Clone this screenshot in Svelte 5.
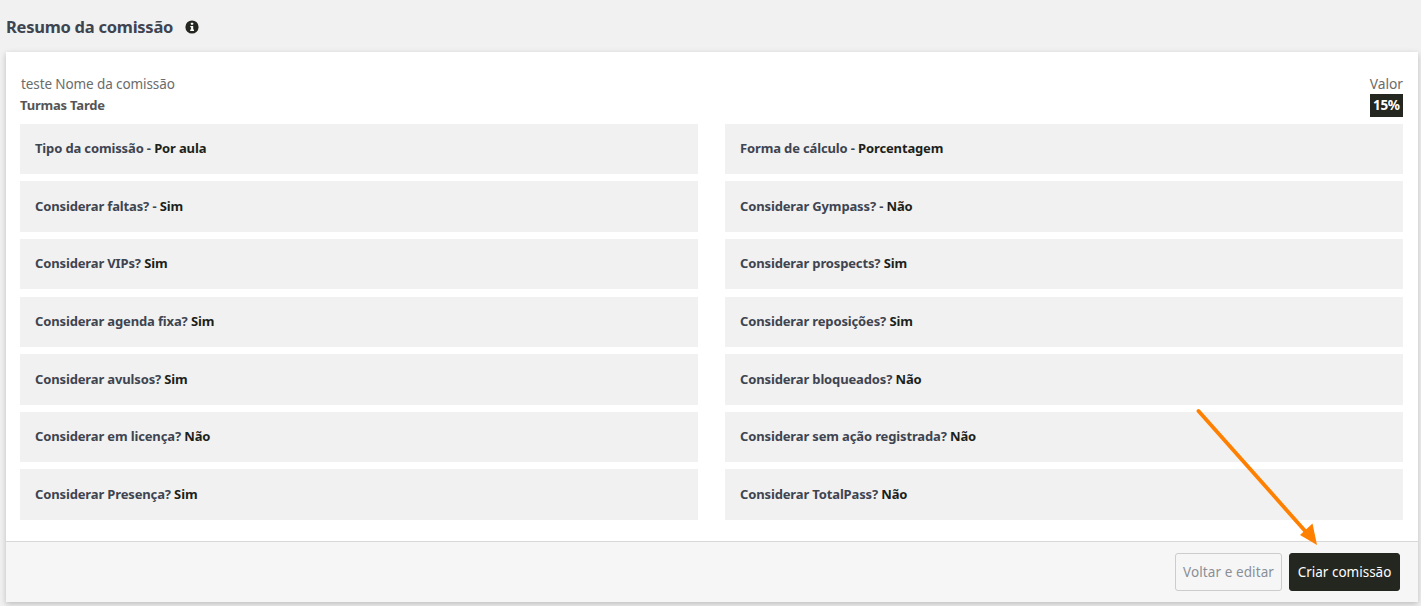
<script>
  const rows = [
    ['Tipo da comissão - ', 'Por aula', 'Forma de cálculo - ', 'Porcentagem'],
    ['Considerar faltas? - ', 'Sim', 'Considerar Gympass? - ', 'Não'],
    ['Considerar VIPs? ', 'Sim', 'Considerar prospects? ', 'Sim'],
    ['Considerar agenda fixa? ', 'Sim', 'Considerar reposições? ', 'Sim'],
    ['Considerar avulsos? ', 'Sim', 'Considerar bloqueados? ', 'Não'],
    ['Considerar em licença? ', 'Não', 'Considerar sem ação registrada? ', 'Não'],
    ['Considerar Presença? ', 'Sim', 'Considerar TotalPass? ', 'Não']
  ];
</script>

<div class="page">
  <h2 class="title">
    Resumo da comissão
    <svg class="info" viewBox="0 0 14 14" width="14" height="14">
      <circle cx="7" cy="7" r="6.6" fill="#23271f" />
      <rect x="5.9" y="2.7" width="2.3" height="2.1" rx="0.5" fill="#fff" />
      <path d="M5.3 6h2.9v3.6h.8v1.3H5.2V9.6h.9V7.3h-.8z" fill="#fff" />
    </svg>
  </h2>

  <div class="card">
    <div class="body">
      <div class="head">
        <div>
          <div class="name">teste Nome da comissão</div>
          <div class="turma">Turmas Tarde</div>
        </div>
        <div class="value">
          <div class="name">Valor</div>
          <span class="badge">15%</span>
        </div>
      </div>

      <div class="grid">
        {#each rows as r}
          <div class="cell">{r[0]}<b>{r[1]}</b></div>
          <div class="cell">{r[2]}<b>{r[3]}</b></div>
        {/each}
      </div>
    </div>

    <div class="footer">
      <button class="btn ghost">Voltar e editar</button>
      <button class="btn dark">Criar comissão</button>
    </div>
  </div>

  <svg class="arrow" width="1421" height="606" viewBox="0 0 1421 606">
    <line x1="1198.5" y1="411" x2="1306" y2="532" stroke="#ff8000" stroke-width="3.8" stroke-linecap="round" />
    <polygon points="1317,545 1300,535 1312.5,523.5" fill="#ff8000" />
  </svg>
</div>

<style>
  :global(body) {
    margin: 0;
    background: #f1f1f1;
  }

  .page {
    position: relative;
    height: 606px;
    overflow: hidden;
    box-sizing: border-box;
    padding: 0 3px 0 6px;
    font-family: "Noto Sans", "Open Sans", sans-serif;
    font-size: 13px;
    color: #3e4450;
  }

  .title {
    display: flex;
    align-items: center;
    gap: 12px;
    height: 52px;
    margin: 0;
    padding-top: 1px;
    box-sizing: border-box;
    font-size: 16.5px;
    font-weight: 700;
    letter-spacing: -0.25px;
    color: #3e4450;
  }

  .card {
    background: #fff;
    height: 550px;
    display: flex;
    flex-direction: column;
    box-shadow: 0 2px 6px rgba(0, 0, 0, 0.22);
  }

  .body {
    flex: 1;
    padding: 23px 15px 0 14px;
  }

  .head {
    display: flex;
    justify-content: space-between;
    height: 48.8px;
  }

  .name {
    font-size: 13.5px;
    line-height: 19px;
    padding-left: 1px;
    color: #6b6b6b;
    letter-spacing: -0.1px;
  }

  .turma {
    font-size: 13px;
    line-height: 22px;
    font-weight: 700;
    color: #555;
    letter-spacing: -0.2px;
  }

  .value {
    text-align: right;
  }

  .value .name {
    font-size: 13.8px;
    line-height: 18px;
    letter-spacing: 0;
  }

  .badge {
    display: inline-block;
    margin-top: 1px;
    background: #23271f;
    color: #fff;
    font-size: 13.5px;
    font-weight: 700;
    line-height: 23px;
    padding: 0 3.5px;
    letter-spacing: -0.4px;
  }

  .grid {
    display: grid;
    grid-template-columns: 678px 678px;
    grid-auto-rows: 50.4px;
    column-gap: 27px;
    row-gap: 7.2px;
  }

  .cell {
    display: flex;
    align-items: center;
    white-space: pre;
    padding: 0 0 1.5px 15px;
    box-sizing: border-box;
    background: #f1f1f1;
    font-weight: 700;
    letter-spacing: -0.14px;
  }

  .cell b {
    font-weight: 700;
    color: #1d1f1b;
  }

  .footer {
    height: 61px;
    display: flex;
    justify-content: flex-end;
    align-items: center;
    gap: 7px;
    padding: 0 18px 0 0;
    box-sizing: border-box;
    background: #f6f6f6;
    border-top: 1px solid #d8d8d8;
  }

  .btn {
    height: 38px;
    border-radius: 3px;
    font-family: inherit;
    font-size: 13.5px;
    padding: 0;
  }

  .ghost {
    width: 107px;
    background: transparent;
    border: 1px solid #ccc;
    color: #8a8f96;
    letter-spacing: 0.1px;
  }

  .dark {
    width: 111px;
    background: #23271f;
    border: 1px solid #23271f;
    color: #fff;
  }

  .arrow {
    position: absolute;
    left: 0;
    top: 0;
    pointer-events: none;
  }
</style>
